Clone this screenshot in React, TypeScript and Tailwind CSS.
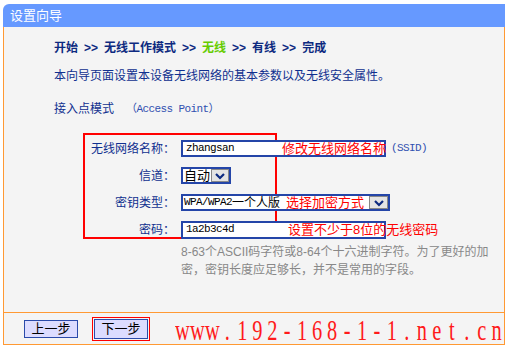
const CN = "font-['Liberation_Sans','Noto_Sans_CJK_SC',sans-serif]";
const MONO = "font-['Liberation_Mono','Noto_Sans_CJK_SC',monospace]";

const crumbs = [
  { t: "开始" },
  { t: "无线工作模式" },
  { t: "无线", on: true },
  { t: "有线" },
  { t: "完成" },
];

function Chevron() {
  return (
    <svg width="12" height="8" viewBox="0 0 12 8">
      <path d="M2 2 L6 6 L10 2" fill="none" stroke="#0d2a80" strokeWidth="2.2" />
    </svg>
  );
}

function Field({ label, children }: { label: string; children: React.ReactNode }) {
  return (
    <div className="flex h-[17px] items-center">
      <div className="w-[92px] shrink-0 text-right">{label}</div>
      <div className="ml-[6px] flex h-full items-center">{children}</div>
    </div>
  );
}

// watermark: serif glyphs on a fixed pitch, squeezed horizontally
function Watermark() {
  const s = "www.192-168-1-1.net.cn";
  return (
    <div className="absolute left-[175px] top-[315px] flex origin-left scale-x-[0.68] font-['Liberation_Serif',serif] text-[30px] leading-[30px] text-[#ff1a1a]">
      {s.split("").map((c, i) => (
        <span key={i} className="inline-block w-[22px] text-center">
          {c}
        </span>
      ))}
    </div>
  );
}

export default function App() {
  return (
    <div className={`relative h-[348px] w-[508px] overflow-hidden bg-white pl-[3px] pt-[4px] text-[12px] text-[#10308f] ${CN}`}>
      <div className="w-[502px]">
        <div className="flex h-[23px] items-center rounded-tl-[6px] bg-[#6699ff] pl-[7px] text-[13px] text-white">设置向导</div>

        <div className="h-[285px] border-x border-[#ff9933] bg-[#f4f4f4] pl-[50px]">
          <div className="flex gap-[6px] pt-[13px] font-bold leading-[16px] text-[#0d2a80]">
            {crumbs.map((c, i) => (
              <span key={c.t} className="flex gap-[6px]">
                {i > 0 && <span>&gt;&gt;</span>}
                <span className={c.on ? "text-[#66cc00]" : ""}>{c.t}</span>
              </span>
            ))}
          </div>

          <div className="mt-[12px] leading-[16px]">本向导页面设置本设备无线网络的基本参数以及无线安全属性。</div>

          <div className="mt-[17px] flex leading-[16px]">
            <span>接入点模式</span>
            <span className={`ml-[12px] ${MONO} text-[11px] tracking-[-0.6px] text-[#3050b0]`}>（Access Point）</span>
          </div>

          <div className="relative ml-[29px] mt-[16px] flex h-[106px] flex-col gap-[10px] pt-[7px]">
            <div className="pointer-events-none absolute left-0 top-0 h-[106px] w-[194px] border-2 border-[#ff0000]" />
            <Field label="无线网络名称：">
              <div className={`relative flex h-[17px] w-[205px] items-center border-2 border-[#2445a8] bg-white pl-[3px] ${MONO} text-[11px] tracking-[-0.6px] text-black`}>
                zhangsan
                <span className={`absolute left-[99px] top-[-2px] whitespace-nowrap ${CN} text-[13px] leading-[17px] tracking-normal text-[#ff0000]`}>修改无线网络名称</span>
              </div>
              <span className={`ml-[5px] ${MONO} text-[11px] tracking-[-0.6px] text-[#3050b0]`}>(SSID)</span>
            </Field>
            <Field label="信道：">
              <div className="flex h-[17px] w-[50px] items-center border-2 border-[#2445a8] bg-white text-black">
                <span className="whitespace-nowrap pl-[1px] text-[13px] leading-[13px]">自动</span>
                <div className="ml-auto flex h-full w-[18px] shrink-0 items-center justify-center border border-[#888] bg-[#e4e4e4]">
                  <Chevron />
                </div>
              </div>
            </Field>
            <Field label="密钥类型：">
              <div className={`relative flex h-[17px] w-[209px] items-center border-2 border-[#2445a8] bg-white pl-[1px] ${MONO} text-[11px] tracking-[-0.6px] text-black`}>
                WPA/WPA2<span className={`${CN} text-[12px] tracking-normal`}>一个人版</span>
                <span className={`absolute left-[103px] top-[-2px] whitespace-nowrap ${CN} text-[13px] leading-[17px] tracking-normal text-[#ff0000]`}>选择加密方式</span>
                <div className="ml-auto flex h-full w-[19px] shrink-0 items-center justify-center border border-[#888] bg-[#e4e4e4]">
                  <Chevron />
                </div>
              </div>
            </Field>
            <Field label="密码：">
              <div className={`relative flex h-[18px] w-[205px] items-center border-2 border-[#2445a8] bg-white pl-[3px] ${MONO} text-[11px] tracking-[-0.6px] text-black`}>
                1a2b3c4d
                <span className={`absolute left-[105px] top-[-2px] whitespace-nowrap ${CN} text-[13px] leading-[18px] tracking-normal text-[#ff0000]`}>设置不少于8位的无线密码</span>
              </div>
            </Field>
          </div>

          <div className="ml-[127px] mt-[4px] whitespace-nowrap leading-[18px] text-[#888888]">
            8-63个ASCII码字符或8-64个十六进制字符。为了更好的加
            <br />
            密，密钥长度应足够长，并不是常用的字段。
          </div>
        </div>

        <div className="flex h-[33px] items-center border border-[#ff9933] bg-[#f4f4f4] pl-[20px] text-[13px] text-black">
          <button className="flex h-[18px] w-[54px] items-center justify-center border border-[#2a4aaa] bg-[#dcdcff]">上一步</button>
          <div className="ml-[14px] border border-[#ff0000] p-[1px]">
            <button className="flex h-[20px] w-[54px] items-center justify-center border border-[#2a4aaa] bg-[#dcdcff]">下一步</button>
          </div>
        </div>
      </div>
      <Watermark />
    </div>
  );
}
